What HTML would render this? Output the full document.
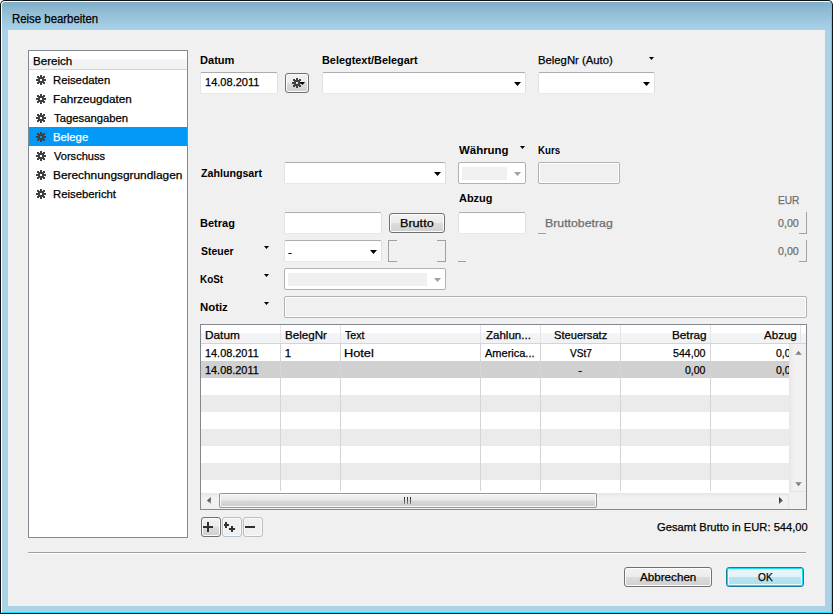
<!DOCTYPE html>
<html><head><meta charset="utf-8"><style>
html,body{margin:0;padding:0;width:833px;height:614px;overflow:hidden;background:#fff}
.a{position:absolute;box-sizing:border-box}
.t{position:absolute;white-space:nowrap;font-family:"Liberation Sans", sans-serif;line-height:1;transform-origin:0 0;-webkit-text-stroke:0.25px currentColor}
</style></head><body>
<div class="a" style="left:0;top:0;width:833px;height:614px;background:#111;border-radius:5px 5px 0 0"></div>
<div class="a" style="left:1px;top:1px;width:831px;height:612px;border-style:solid;border-width:1px;border-color:#ffffff #30def4 #18e4f8 #ffffff;border-radius:4px 4px 0 0;background:linear-gradient(#80aec8 0px,#98c2d9 14px,#a8d2e9 28px,#acd2e8 40px,#acd2e8 100%)"></div>
<div class="a" style="left:8px;top:30px;width:817px;height:576px;background:#f0f0f0"></div>
<div class="a" style="left:28px;top:50px;width:160px;height:488px;background:#fff;border:1px solid #828790;box-sizing:border-box"></div>
<div class="a" style="left:29px;top:51px;width:158px;height:18px;background:linear-gradient(#fff 0,#fff 40%,#f3f4f6 50%,#f1f2f4 100%)"></div>
<div class="a" style="left:29px;top:69px;width:158px;height:1px;background:#d5d5d5"></div>
<div class="a" style="left:29px;top:127px;width:158px;height:19px;background:#0399f6"></div>
<svg class="a" style="left:36px;top:75px" width="10" height="10" fill="#404040" shape-rendering="crispEdges"><rect x="4" y="0" width="2" height="1"/><rect x="1" y="1" width="2" height="1"/><rect x="4" y="1" width="2" height="1"/><rect x="7" y="1" width="2" height="1"/><rect x="1" y="2" width="8" height="1"/><rect x="2" y="3" width="6" height="1"/><rect x="0" y="4" width="4" height="1"/><rect x="6" y="4" width="4" height="1"/><rect x="0" y="5" width="4" height="1"/><rect x="6" y="5" width="4" height="1"/><rect x="2" y="6" width="6" height="1"/><rect x="1" y="7" width="8" height="1"/><rect x="1" y="8" width="2" height="1"/><rect x="4" y="8" width="2" height="1"/><rect x="7" y="8" width="2" height="1"/><rect x="4" y="9" width="2" height="1"/></svg>
<svg class="a" style="left:36px;top:94px" width="10" height="10" fill="#404040" shape-rendering="crispEdges"><rect x="4" y="0" width="2" height="1"/><rect x="1" y="1" width="2" height="1"/><rect x="4" y="1" width="2" height="1"/><rect x="7" y="1" width="2" height="1"/><rect x="1" y="2" width="8" height="1"/><rect x="2" y="3" width="6" height="1"/><rect x="0" y="4" width="4" height="1"/><rect x="6" y="4" width="4" height="1"/><rect x="0" y="5" width="4" height="1"/><rect x="6" y="5" width="4" height="1"/><rect x="2" y="6" width="6" height="1"/><rect x="1" y="7" width="8" height="1"/><rect x="1" y="8" width="2" height="1"/><rect x="4" y="8" width="2" height="1"/><rect x="7" y="8" width="2" height="1"/><rect x="4" y="9" width="2" height="1"/></svg>
<svg class="a" style="left:36px;top:113px" width="10" height="10" fill="#404040" shape-rendering="crispEdges"><rect x="4" y="0" width="2" height="1"/><rect x="1" y="1" width="2" height="1"/><rect x="4" y="1" width="2" height="1"/><rect x="7" y="1" width="2" height="1"/><rect x="1" y="2" width="8" height="1"/><rect x="2" y="3" width="6" height="1"/><rect x="0" y="4" width="4" height="1"/><rect x="6" y="4" width="4" height="1"/><rect x="0" y="5" width="4" height="1"/><rect x="6" y="5" width="4" height="1"/><rect x="2" y="6" width="6" height="1"/><rect x="1" y="7" width="8" height="1"/><rect x="1" y="8" width="2" height="1"/><rect x="4" y="8" width="2" height="1"/><rect x="7" y="8" width="2" height="1"/><rect x="4" y="9" width="2" height="1"/></svg>
<svg class="a" style="left:36px;top:132px" width="10" height="10" fill="#404040" shape-rendering="crispEdges"><rect x="4" y="0" width="2" height="1"/><rect x="1" y="1" width="2" height="1"/><rect x="4" y="1" width="2" height="1"/><rect x="7" y="1" width="2" height="1"/><rect x="1" y="2" width="8" height="1"/><rect x="2" y="3" width="6" height="1"/><rect x="0" y="4" width="4" height="1"/><rect x="6" y="4" width="4" height="1"/><rect x="0" y="5" width="4" height="1"/><rect x="6" y="5" width="4" height="1"/><rect x="2" y="6" width="6" height="1"/><rect x="1" y="7" width="8" height="1"/><rect x="1" y="8" width="2" height="1"/><rect x="4" y="8" width="2" height="1"/><rect x="7" y="8" width="2" height="1"/><rect x="4" y="9" width="2" height="1"/></svg>
<svg class="a" style="left:36px;top:151px" width="10" height="10" fill="#404040" shape-rendering="crispEdges"><rect x="4" y="0" width="2" height="1"/><rect x="1" y="1" width="2" height="1"/><rect x="4" y="1" width="2" height="1"/><rect x="7" y="1" width="2" height="1"/><rect x="1" y="2" width="8" height="1"/><rect x="2" y="3" width="6" height="1"/><rect x="0" y="4" width="4" height="1"/><rect x="6" y="4" width="4" height="1"/><rect x="0" y="5" width="4" height="1"/><rect x="6" y="5" width="4" height="1"/><rect x="2" y="6" width="6" height="1"/><rect x="1" y="7" width="8" height="1"/><rect x="1" y="8" width="2" height="1"/><rect x="4" y="8" width="2" height="1"/><rect x="7" y="8" width="2" height="1"/><rect x="4" y="9" width="2" height="1"/></svg>
<svg class="a" style="left:36px;top:170px" width="10" height="10" fill="#404040" shape-rendering="crispEdges"><rect x="4" y="0" width="2" height="1"/><rect x="1" y="1" width="2" height="1"/><rect x="4" y="1" width="2" height="1"/><rect x="7" y="1" width="2" height="1"/><rect x="1" y="2" width="8" height="1"/><rect x="2" y="3" width="6" height="1"/><rect x="0" y="4" width="4" height="1"/><rect x="6" y="4" width="4" height="1"/><rect x="0" y="5" width="4" height="1"/><rect x="6" y="5" width="4" height="1"/><rect x="2" y="6" width="6" height="1"/><rect x="1" y="7" width="8" height="1"/><rect x="1" y="8" width="2" height="1"/><rect x="4" y="8" width="2" height="1"/><rect x="7" y="8" width="2" height="1"/><rect x="4" y="9" width="2" height="1"/></svg>
<svg class="a" style="left:36px;top:189px" width="10" height="10" fill="#404040" shape-rendering="crispEdges"><rect x="4" y="0" width="2" height="1"/><rect x="1" y="1" width="2" height="1"/><rect x="4" y="1" width="2" height="1"/><rect x="7" y="1" width="2" height="1"/><rect x="1" y="2" width="8" height="1"/><rect x="2" y="3" width="6" height="1"/><rect x="0" y="4" width="4" height="1"/><rect x="6" y="4" width="4" height="1"/><rect x="0" y="5" width="4" height="1"/><rect x="6" y="5" width="4" height="1"/><rect x="2" y="6" width="6" height="1"/><rect x="1" y="7" width="8" height="1"/><rect x="1" y="8" width="2" height="1"/><rect x="4" y="8" width="2" height="1"/><rect x="7" y="8" width="2" height="1"/><rect x="4" y="9" width="2" height="1"/></svg>
<div class="a" style="left:28px;top:552px;width:778px;height:1px;background:#a0a0a0"></div>
<div class="a" style="left:28px;top:553px;width:778px;height:1px;background:#fff"></div>
<div class="a" style="left:624px;top:567px;width:88px;height:20px;border:1px solid #707070;border-radius:3px;box-sizing:border-box;background:linear-gradient(#f2f2f2 0,#ebebeb 50%,#dddddd 50%,#cfcfcf 100%);box-shadow:inset 0 0 0 1px #fcfcfc"></div>
<div class="a" style="left:726px;top:567px;width:78px;height:20px;border:1px solid #127ea6;border-radius:3px;box-sizing:border-box;background:linear-gradient(#e8f6fa 0,#e2f3f8 50%,#b8e3ef 50%,#aedfec 100%);box-shadow:inset 0 0 0 1px #14dcf6, inset 0 0 0 2px #eef8fb"></div>
<div class="a" style="left:200px;top:72px;width:78px;height:22px;background:#fff;border:1px solid;border-color:#abadb3 #dbdfe6 #e3e9ef #e2e3ea;border-radius:2px;box-sizing:border-box"></div>
<div class="a" style="left:285px;top:73px;width:24px;height:20px;border:1px solid #707070;border-radius:3px;box-sizing:border-box;background:linear-gradient(#f2f2f2 0,#ebebeb 50%,#dddddd 50%,#cfcfcf 100%);box-shadow:inset 0 0 0 1px #fcfcfc"></div>
<svg class="a" style="left:292px;top:78px" width="10" height="10" fill="#404040" shape-rendering="crispEdges"><rect x="4" y="0" width="2" height="1"/><rect x="1" y="1" width="2" height="1"/><rect x="4" y="1" width="2" height="1"/><rect x="7" y="1" width="2" height="1"/><rect x="1" y="2" width="8" height="1"/><rect x="2" y="3" width="6" height="1"/><rect x="0" y="4" width="4" height="1"/><rect x="6" y="4" width="4" height="1"/><rect x="0" y="5" width="4" height="1"/><rect x="6" y="5" width="4" height="1"/><rect x="2" y="6" width="6" height="1"/><rect x="1" y="7" width="8" height="1"/><rect x="1" y="8" width="2" height="1"/><rect x="4" y="8" width="2" height="1"/><rect x="7" y="8" width="2" height="1"/><rect x="4" y="9" width="2" height="1"/></svg>
<svg class="a" style="left:300px;top:82px" width="5" height="3"><path d="M0 0H5L2.5 3Z" fill="#000"/></svg>
<div class="a" style="left:322px;top:72px;width:204px;height:22px;background:#fff;border:1px solid;border-color:#abadb3 #dbdfe6 #e3e9ef #e2e3ea;border-radius:2px;box-sizing:border-box"></div>
<svg class="a" style="left:514px;top:82px" width="7" height="4"><path d="M0 0H7L3.5 4Z" fill="#000"/></svg>
<div class="a" style="left:538px;top:72px;width:117px;height:22px;background:#fff;border:1px solid;border-color:#abadb3 #dbdfe6 #e3e9ef #e2e3ea;border-radius:2px;box-sizing:border-box"></div>
<svg class="a" style="left:643px;top:82px" width="7" height="4"><path d="M0 0H7L3.5 4Z" fill="#000"/></svg>
<svg class="a" style="left:649px;top:57px" width="5" height="3"><path d="M0 0H5L2.5 3Z" fill="#000"/></svg>
<div class="a" style="left:284px;top:162px;width:162px;height:22px;background:#fff;border:1px solid;border-color:#abadb3 #dbdfe6 #e3e9ef #e2e3ea;border-radius:2px;box-sizing:border-box"></div>
<svg class="a" style="left:434px;top:172px" width="7" height="4"><path d="M0 0H7L3.5 4Z" fill="#000"/></svg>
<div class="a" style="left:458px;top:162px;width:68px;height:22px;background:#fff;border:1px solid #adb2b5;border-radius:2px;box-sizing:border-box"></div>
<div class="a" style="left:462px;top:167px;width:45px;height:13px;background:#f0f0f0"></div>
<svg class="a" style="left:514px;top:172px" width="7" height="4"><path d="M0 0H7L3.5 4Z" fill="#a0a0a0"/></svg>
<svg class="a" style="left:520px;top:146px" width="5" height="3"><path d="M0 0H5L2.5 3Z" fill="#000"/></svg>
<div class="a" style="left:538px;top:162px;width:82px;height:22px;background:#f0f0f0;border:1px solid #adb2b5;border-radius:2px;box-sizing:border-box;box-shadow:inset 0 0 0 1px #fff"></div>
<div class="a" style="left:458px;top:212px;width:68px;height:22px;background:#fff;border:1px solid;border-color:#abadb3 #dbdfe6 #e3e9ef #e2e3ea;border-radius:2px;box-sizing:border-box"></div>
<div class="a" style="left:284px;top:212px;width:98px;height:22px;background:#fff;border:1px solid;border-color:#abadb3 #dbdfe6 #e3e9ef #e2e3ea;border-radius:2px;box-sizing:border-box"></div>
<div class="a" style="left:389px;top:213px;width:56px;height:20px;border:1px solid #707070;border-radius:3px;box-sizing:border-box;background:linear-gradient(#f2f2f2 0,#ebebeb 50%,#dddddd 50%,#cfcfcf 100%);box-shadow:inset 0 0 0 1px #fcfcfc"></div>
<div class="a" style="left:538px;top:233px;width:8px;height:1px;background:#a0a0a0"></div>
<div class="a" style="left:806px;top:212px;width:1px;height:22px;background:#a0a0a0"></div>
<div class="a" style="left:799px;top:233px;width:8px;height:1px;background:#a0a0a0"></div>
<svg class="a" style="left:264px;top:246px" width="5" height="3"><path d="M0 0H5L2.5 3Z" fill="#000"/></svg>
<div class="a" style="left:284px;top:240px;width:98px;height:22px;background:#fff;border:1px solid;border-color:#abadb3 #dbdfe6 #e3e9ef #e2e3ea;border-radius:2px;box-sizing:border-box"></div>
<svg class="a" style="left:370px;top:250px" width="7" height="4"><path d="M0 0H7L3.5 4Z" fill="#000"/></svg>
<div class="a" style="left:388px;top:240px;width:1px;height:22px;background:#a0a0a0"></div>
<div class="a" style="left:388px;top:240px;width:9px;height:1px;background:#a0a0a0"></div>
<div class="a" style="left:388px;top:261px;width:9px;height:1px;background:#a0a0a0"></div>
<div class="a" style="left:445px;top:240px;width:1px;height:22px;background:#a0a0a0"></div>
<div class="a" style="left:437px;top:240px;width:9px;height:1px;background:#a0a0a0"></div>
<div class="a" style="left:437px;top:261px;width:9px;height:1px;background:#a0a0a0"></div>
<div class="a" style="left:458px;top:261px;width:8px;height:1px;background:#a0a0a0"></div>
<div class="a" style="left:806px;top:240px;width:1px;height:22px;background:#a0a0a0"></div>
<div class="a" style="left:799px;top:261px;width:8px;height:1px;background:#a0a0a0"></div>
<svg class="a" style="left:264px;top:274px" width="5" height="3"><path d="M0 0H5L2.5 3Z" fill="#000"/></svg>
<div class="a" style="left:284px;top:268px;width:162px;height:22px;background:#fff;border:1px solid #adb2b5;border-radius:2px;box-sizing:border-box"></div>
<div class="a" style="left:288px;top:273px;width:139px;height:13px;background:#f0f0f0"></div>
<svg class="a" style="left:434px;top:278px" width="7" height="4"><path d="M0 0H7L3.5 4Z" fill="#a0a0a0"/></svg>
<svg class="a" style="left:264px;top:302px" width="5" height="3"><path d="M0 0H5L2.5 3Z" fill="#000"/></svg>
<div class="a" style="left:284px;top:296px;width:523px;height:22px;background:#f0f0f0;border:1px solid #adb2b5;border-radius:2px;box-sizing:border-box;box-shadow:inset 0 0 0 1px #fff"></div>
<div class="a" style="left:200px;top:324px;width:607px;height:186px;background:#fff;border:1px solid #828790;box-sizing:border-box"></div>
<div class="a" style="left:201px;top:325px;width:605px;height:18px;background:linear-gradient(#fff 0,#fff 40%,#f3f4f6 50%,#f1f2f4 100%)"></div>
<div class="a" style="left:201px;top:343px;width:605px;height:1px;background:#d5d5d5"></div>
<div class="a" style="left:201px;top:361px;width:588px;height:17px;background:#d0d0d0"></div>
<div class="a" style="left:201px;top:395px;width:588px;height:17px;background:#ebebeb"></div>
<div class="a" style="left:201px;top:429px;width:588px;height:17px;background:#ebebeb"></div>
<div class="a" style="left:201px;top:463px;width:588px;height:17px;background:#ebebeb"></div>
<div class="a" style="left:280px;top:325px;width:1px;height:18px;background:#e3e4e6"></div>
<div class="a" style="left:280px;top:344px;width:1px;height:147px;background:#d5d5d5"></div>
<div class="a" style="left:340px;top:325px;width:1px;height:18px;background:#e3e4e6"></div>
<div class="a" style="left:340px;top:344px;width:1px;height:147px;background:#d5d5d5"></div>
<div class="a" style="left:480px;top:325px;width:1px;height:18px;background:#e3e4e6"></div>
<div class="a" style="left:480px;top:344px;width:1px;height:147px;background:#d5d5d5"></div>
<div class="a" style="left:540px;top:325px;width:1px;height:18px;background:#e3e4e6"></div>
<div class="a" style="left:540px;top:344px;width:1px;height:147px;background:#d5d5d5"></div>
<div class="a" style="left:620px;top:325px;width:1px;height:18px;background:#e3e4e6"></div>
<div class="a" style="left:620px;top:344px;width:1px;height:147px;background:#d5d5d5"></div>
<div class="a" style="left:710px;top:325px;width:1px;height:18px;background:#e3e4e6"></div>
<div class="a" style="left:710px;top:344px;width:1px;height:147px;background:#d5d5d5"></div>
<div class="a" style="left:800px;top:325px;width:1px;height:18px;background:#e3e4e6"></div>
<span class="t" id="t0" style="left:12.35px;top:13.14px;font-size:12px;color:#000;transform:scaleX(0.9494);">Reise bearbeiten</span>
<span class="t" id="t1" style="left:32.79px;top:55.59px;font-size:11.5px;color:#000;transform:scaleX(1.0054);">Bereich</span>
<span class="t" id="t2" style="left:52.82px;top:74.59px;font-size:11.5px;color:#000;transform:scaleX(0.9825);">Reisedaten</span>
<span class="t" id="t3" style="left:52.78px;top:93.59px;font-size:11.5px;color:#000;transform:scaleX(1.0171);">Fahrzeugdaten</span>
<span class="t" id="t4" style="left:53.80px;top:112.59px;font-size:11.5px;color:#000;transform:scaleX(0.9827);">Tagesangaben</span>
<span class="t" id="t5" style="left:52.82px;top:131.59px;font-size:11.5px;color:#fff;transform:scaleX(0.9829);">Belege</span>
<span class="t" id="t6" style="left:53.80px;top:150.59px;font-size:11.5px;color:#000;transform:scaleX(0.9623);">Vorschuss</span>
<span class="t" id="t7" style="left:52.77px;top:169.59px;font-size:11.5px;color:#000;transform:scaleX(1.0323);">Berechnungsgrundlagen</span>
<span class="t" id="t8" style="left:52.81px;top:188.59px;font-size:11.5px;color:#000;transform:scaleX(0.9857);">Reisebericht</span>
<span class="t" id="t9" style="left:200.34px;top:54.59px;font-size:11.5px;color:#000;font-weight:bold;-webkit-text-stroke:0;transform:scaleX(0.9618);">Datum</span>
<span class="t" id="t10" style="left:321.65px;top:54.59px;font-size:11.5px;color:#000;font-weight:bold;-webkit-text-stroke:0;transform:scaleX(0.9470);">Belegtext/Belegart</span>
<span class="t" id="t11" style="left:538.32px;top:54.59px;font-size:11.5px;color:#000;transform:scaleX(0.9827);">BelegNr (Auto)</span>
<span class="t" id="t12" style="left:205.34px;top:76.59px;font-size:11.5px;color:#000;transform:scaleX(0.9600);">14.08.2011</span>
<span class="t" id="t13" style="left:200.80px;top:167.59px;font-size:11.5px;color:#000;font-weight:bold;-webkit-text-stroke:0;transform:scaleX(0.9258);">Zahlungsart</span>
<span class="t" id="t14" style="left:458.50px;top:144.59px;font-size:11.5px;color:#000;font-weight:bold;-webkit-text-stroke:0;transform:scaleX(0.9939);">Währung</span>
<span class="t" id="t15" style="left:538.06px;top:144.59px;font-size:11.5px;color:#000;font-weight:bold;-webkit-text-stroke:0;transform:scaleX(0.8440);">Kurs</span>
<span class="t" id="t16" style="left:458.50px;top:192.59px;font-size:11.5px;color:#000;font-weight:bold;-webkit-text-stroke:0;transform:scaleX(0.9529);">Abzug</span>
<span class="t" id="t17" style="left:777.92px;top:194.59px;font-size:11.5px;color:#6d6d6d;transform:scaleX(0.8826);">EUR</span>
<span class="t" id="t18" style="left:199.84px;top:217.59px;font-size:11.5px;color:#000;font-weight:bold;-webkit-text-stroke:0;transform:scaleX(0.9571);">Betrag</span>
<span class="t" id="t19" style="left:399.80px;top:217.59px;font-size:11.5px;color:#000;transform:scaleX(1.0966);">Brutto</span>
<span class="t" id="t20" style="left:545.23px;top:217.59px;font-size:11.5px;color:#6d6d6d;transform:scaleX(1.0710);">Bruttobetrag</span>
<span class="t" id="t21" style="left:777.90px;top:217.59px;font-size:11.5px;color:#6d6d6d;transform:scaleX(0.9273);">0,00</span>
<span class="t" id="t22" style="left:200.80px;top:245.59px;font-size:11.5px;color:#000;font-weight:bold;-webkit-text-stroke:0;transform:scaleX(0.9083);">Steuer</span>
<span class="t" id="t23" style="left:287.90px;top:246.59px;font-size:11.5px;color:#000;">-</span>
<span class="t" id="t24" style="left:777.90px;top:245.59px;font-size:11.5px;color:#6d6d6d;transform:scaleX(0.9273);">0,00</span>
<span class="t" id="t25" style="left:199.94px;top:273.59px;font-size:11.5px;color:#000;font-weight:bold;-webkit-text-stroke:0;transform:scaleX(0.8615);">KoSt</span>
<span class="t" id="t26" style="left:199.81px;top:301.59px;font-size:11.5px;color:#000;font-weight:bold;-webkit-text-stroke:0;transform:scaleX(0.9889);">Notiz</span>
<span class="t" id="t27" style="left:205.07px;top:329.59px;font-size:11.5px;color:#000;transform:scaleX(1.0281);">Datum</span>
<span class="t" id="t28" style="left:284.79px;top:329.59px;font-size:11.5px;color:#000;transform:scaleX(1.0100);">BelegNr</span>
<span class="t" id="t29" style="left:345.30px;top:329.59px;font-size:11.5px;color:#000;transform:scaleX(0.9190);">Text</span>
<span class="t" id="t30" style="left:485.70px;top:329.59px;font-size:11.5px;color:#000;transform:scaleX(1.0023);">Zahlun...</span>
<span class="t" id="t31" style="left:553.83px;top:329.59px;font-size:11.5px;color:#000;transform:scaleX(0.9685);">Steuersatz</span>
<span class="t" id="t32" style="left:672.18px;top:329.59px;font-size:11.5px;color:#000;transform:scaleX(1.0219);">Betrag</span>
<span class="t" id="t33" style="left:763.50px;top:329.59px;font-size:11.5px;color:#000;transform:scaleX(1.0062);">Abzug</span>
<span class="t" id="t34" style="left:205.15px;top:347.59px;font-size:11.5px;color:#000;transform:scaleX(0.9473);">14.08.2011</span>
<span class="t" id="t35" style="left:284.80px;top:347.59px;font-size:11.5px;color:#000;">1</span>
<span class="t" id="t36" style="left:344.19px;top:347.59px;font-size:11.5px;color:#000;transform:scaleX(1.1080);">Hotel</span>
<span class="t" id="t37" style="left:485.30px;top:347.59px;font-size:11.5px;color:#000;transform:scaleX(0.9569);">America...</span>
<span class="t" id="t38" style="left:569.80px;top:347.59px;font-size:11.5px;color:#000;transform:scaleX(0.8760);">VSt7</span>
<span class="t" id="t39" style="left:672.98px;top:347.59px;font-size:11.5px;color:#000;transform:scaleX(0.9235);">544,00</span>
<span class="t" id="t40" style="left:205.15px;top:364.59px;font-size:11.5px;color:#000;transform:scaleX(0.9473);">14.08.2011</span>
<span class="t" id="t41" style="left:578.30px;top:364.59px;font-size:11.5px;color:#000;">-</span>
<span class="t" id="t42" style="left:685.20px;top:364.59px;font-size:11.5px;color:#000;transform:scaleX(0.9136);">0,00</span>
<span class="t" id="t43" style="left:775.50px;top:347.59px;font-size:11.5px;color:#000;transform:scaleX(0.9136);">0,00</span>
<span class="t" id="t44" style="left:775.50px;top:364.59px;font-size:11.5px;color:#000;transform:scaleX(0.9136);">0,00</span>
<span class="t" id="t45" style="left:656.63px;top:521.59px;font-size:11.5px;color:#000;transform:scaleX(0.9708);">Gesamt Brutto in EUR: 544,00</span>
<span class="t" id="t46" style="left:640.30px;top:571.59px;font-size:11.5px;color:#000;transform:scaleX(1.0127);">Abbrechen</span>
<span class="t" id="t47" style="left:758.00px;top:571.59px;font-size:11.5px;color:#000;transform:scaleX(0.8812);">OK</span>
<div class="a" style="left:789px;top:344px;width:17px;height:149px;background:linear-gradient(90deg,#e6e6e6,#f2f2f2 30%,#f0f0f0)"></div>
<svg class="a" style="left:795px;top:351px" width="7" height="4"><defs><linearGradient id="gu" x1="0" y1="0" x2="0" y2="1"><stop offset="0" stop-color="#505050"/><stop offset="1" stop-color="#a8a8a8"/></linearGradient></defs><path d="M0 4H7L3.5 0Z" fill="url(#gu)"/></svg>
<svg class="a" style="left:795px;top:482px" width="7" height="4"><defs><linearGradient id="gd" x1="0" y1="0" x2="0" y2="1"><stop offset="0" stop-color="#a8a8a8"/><stop offset="1" stop-color="#505050"/></linearGradient></defs><path d="M0 0H7L3.5 4Z" fill="url(#gd)"/></svg>
<div class="a" style="left:201px;top:493px;width:588px;height:16px;background:linear-gradient(#e6e6e6,#f2f2f2 30%,#f0f0f0)"></div>
<div class="a" style="left:789px;top:492px;width:17px;height:17px;background:#f0f0f0"></div>
<div class="a" style="left:789px;top:491px;width:17px;height:1px;background:#e4e4e4"></div>
<div class="a" style="left:788px;top:493px;width:1px;height:16px;background:#e4e4e4"></div>
<svg class="a" style="left:207px;top:497px" width="4" height="7"><defs><linearGradient id="gl" x1="0" y1="0" x2="1" y2="1"><stop offset="0" stop-color="#101010"/><stop offset="1" stop-color="#b0b0b0"/></linearGradient></defs><path d="M4 0V7L0 3.5Z" fill="url(#gl)"/></svg>
<svg class="a" style="left:779px;top:497px" width="4" height="7"><defs><linearGradient id="gr" x1="0" y1="0" x2="1" y2="1"><stop offset="0" stop-color="#101010"/><stop offset="1" stop-color="#a0a0a0"/></linearGradient></defs><path d="M0 0V7L4 3.5Z" fill="url(#gr)"/></svg>
<div class="a" style="left:219px;top:493px;width:378px;height:15px;border:1px solid #959595;border-radius:2px;box-sizing:border-box;background:linear-gradient(#f3f3f3 0,#e9e9e9 45%,#d8d8d8 55%,#cbcbcb 100%);box-shadow:inset 0 0 0 1px #fafafa"></div>
<div class="a" style="left:404px;top:497px;width:1px;height:7px;background:linear-gradient(#222,#888)"></div>
<div class="a" style="left:407px;top:497px;width:1px;height:7px;background:linear-gradient(#222,#888)"></div>
<div class="a" style="left:410px;top:497px;width:1px;height:7px;background:linear-gradient(#222,#888)"></div>
<div class="a" style="left:201px;top:517px;width:20px;height:20px;border:1px solid #707070;border-radius:3px;box-sizing:border-box;background:linear-gradient(#f2f2f2 0,#ebebeb 50%,#dddddd 50%,#cfcfcf 100%);box-shadow:inset 0 0 0 1px #fcfcfc"></div>
<div class="a" style="left:222px;top:517px;width:20px;height:20px;border:1px solid #b5c0c9;border-radius:3px;box-sizing:border-box;background:#f0f0f0;box-shadow:inset 0 0 0 1px #fafafa"></div>
<div class="a" style="left:243px;top:517px;width:20px;height:20px;border:1px solid #b5c0c9;border-radius:3px;box-sizing:border-box;background:#f0f0f0;box-shadow:inset 0 0 0 1px #fafafa"></div>
<div class="a" style="left:203px;top:526px;width:10px;height:2px;background:#303030"></div>
<div class="a" style="left:207px;top:522px;width:2px;height:10px;background:#303030"></div>
<div class="a" style="left:224px;top:524px;width:5px;height:2px;background:#303030"></div>
<div class="a" style="left:225px;top:522px;width:2px;height:6px;background:#303030"></div>
<div class="a" style="left:229px;top:528px;width:6px;height:2px;background:#303030"></div>
<div class="a" style="left:231px;top:526px;width:2px;height:6px;background:#303030"></div>
<div class="a" style="left:245px;top:526px;width:10px;height:2px;background:#303030"></div>
</body></html>
